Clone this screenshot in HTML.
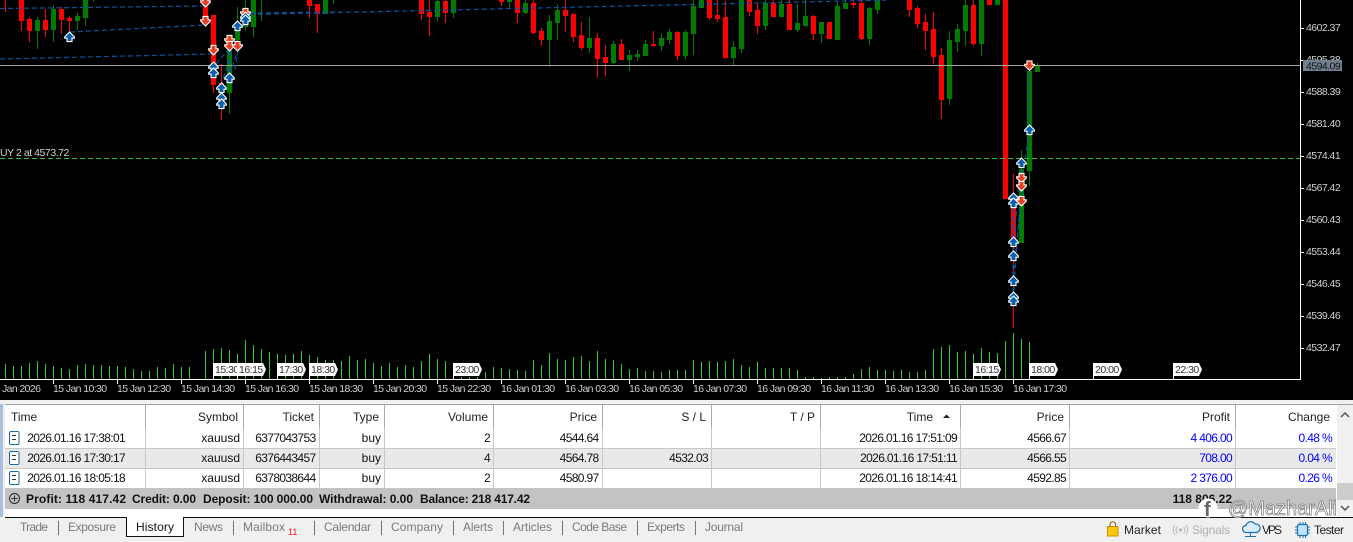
<!DOCTYPE html>
<html><head><meta charset="utf-8"><style>
html,body{margin:0;padding:0;width:1353px;height:542px;overflow:hidden;background:#f0f0f0}
svg{display:block;font-family:"Liberation Sans",sans-serif}
.p text{font-size:10.5px;letter-spacing:-.55px;fill:#d0d0d0}
.tm text{font-size:10.5px;letter-spacing:-.6px;fill:#d0d0d0}
.tg text{font-size:10.5px;letter-spacing:-.5px;fill:#333}
.h text{font-size:12px;fill:#222;text-anchor:end}
.r text{font-size:12px;letter-spacing:-.65px;fill:#111;text-anchor:end}
.r .a{letter-spacing:0}
.r .b{fill:#0000ff}
.s text{font-size:12px;font-weight:bold;fill:#111}
.t text{font-size:12px;fill:#7a7a7a}
.st text{font-size:12px;fill:#222}
</style></head><body>
<svg width="1353" height="542" viewBox="0 0 1353 542" xmlns="http://www.w3.org/2000/svg">
<defs>
<path id="u" d="M0-5 4.800-.2V1.200H2.500V4.600H-2.500V1.200H-4.800V-.2Z" fill="#0a5fae" stroke="#fff" stroke-width="1.100"/>
<path id="d" d="M0 5 4.800 .2V-1.200H2.500V-4.600H-2.500V-1.200H-4.800V.2Z" fill="#e8401f" stroke="#fff" stroke-width="1.100"/>
</defs>
<rect width="1353" height="400" fill="#000"/>

<!-- volumes -->
<path stroke="#32cd32" fill="none" shape-rendering="crispEdges" d="M5.5 364V379M13.5 366V379M21.5 366V379M29.5 363V379M37.5 361V379M45.5 364V379M53.5 366V379M61.5 368V379M69.5 369V379M77.5 365V379M85.5 364V379M93.5 365V379M101.5 365V379M109.5 366V379M117.5 366V379M125.5 367V379M133.5 369V379M141.5 371V379M149.5 371V379M157.5 367V379M165.5 368V379M173.5 364V379M181.5 367V379M189.5 367V379M205.5 351V379M213.5 349V379M221.5 348V379M229.5 350V379M237.5 354V379M245.5 340V379M253.5 345V379M261.5 349V379M269.5 352V379M277.5 354V379M285.5 355V379M293.5 354V379M301.5 351V379M309.5 355V379M317.5 357V379M325.5 360V379M333.5 360V379M341.5 361V379M349.5 356V379M357.5 360V379M365.5 359V379M373.5 363V379M381.5 366V379M389.5 363V379M397.5 367V379M405.5 365V379M413.5 367V379M421.5 361V379M429.5 354V379M437.5 359V379M445.5 361V379M461.5 377V379M469.5 377V379M477.5 377V379M485.5 372V379M493.5 367V379M501.5 368V379M509.5 369V379M517.5 370V379M525.5 371V379M533.5 360V379M541.5 365V379M549.5 353V379M557.5 359V379M565.5 360V379M573.5 357V379M581.5 356V379M589.5 361V379M597.5 351V379M605.5 359V379M613.5 360V379M621.5 364V379M629.5 369V379M637.5 368V379M645.5 371V379M653.5 371V379M661.5 372V379M669.5 370V379M677.5 370V379M685.5 370V379M693.5 360V379M701.5 362V379M709.5 361V379M717.5 362V379M725.5 361V379M733.5 359V379M741.5 365V379M749.5 367V379M757.5 362V379M765.5 368V379M773.5 368V379M781.5 368V379M789.5 368V379M797.5 370V379M805.5 377V379M813.5 377V379M821.5 378V379M829.5 377V379M837.5 377V379M845.5 377V379M853.5 374V379M861.5 369V379M869.5 367V379M877.5 370V379M885.5 370V379M893.5 371V379M901.5 370V379M909.5 372V379M917.5 372V379M925.5 370V379M933.5 349V379M941.5 347V379M949.5 345V379M957.5 352V379M965.5 351V379M973.5 354V379M981.5 348V379M989.5 352V379M997.5 353V379M1005.5 341V379M1013.5 333V379M1021.5 339V379M1029.5 342V379"/>

<!-- red wicks -->
<path stroke="#f00" fill="none" shape-rendering="crispEdges" d="M5.5 0V12M21.5 0V31M29.5 17V42M45.5 9V37M61.5 7V34M69.5 16V33M205.5 0V27M213.5 15V93M221.5 64V120M309.5 0V18M317.5 4V33M421.5 0V20M429.5 0V36M445.5 0V23M501.5 0V6M517.5 0V23M533.5 0V34M541.5 28V46M565.5 0V32M573.5 13V42M581.5 22V50M597.5 33V78M605.5 45V76M621.5 39V60M653.5 31V47M677.5 31V60M709.5 0V20M717.5 0V22M725.5 1V59M749.5 0V16M757.5 3V34M773.5 0V17M789.5 0V30M813.5 15V40M829.5 22V39M853.5 0V8M861.5 0V40M909.5 0V17M917.5 6V28M925.5 14V50M933.5 12V64M941.5 48V119M973.5 0V46M1005.5 0V199M1013.5 174V328"/>
<!-- red bodies -->
<path stroke="#f00" stroke-width="5" fill="none" shape-rendering="crispEdges" d="M21.5 0V21M29.5 19V31M45.5 20V30M61.5 9V20M69.5 18V21M205.5 0V20M213.5 15V85M221.5 83V90M309.5 0V6M317.5 4V14M421.5 0V14M429.5 12V17M445.5 1V13M501.5 0V2M517.5 0V13M533.5 3V33M541.5 31V40M565.5 10V16M573.5 14V37M581.5 35V48M597.5 38V59M605.5 57V63M621.5 44V60M653.5 44V46M677.5 32V56M709.5 0V18M717.5 15V19M725.5 17V58M749.5 0V12M757.5 10V26M773.5 3V17M789.5 4V30M813.5 16V34M829.5 22V39M853.5 3V5M861.5 3V39M909.5 0V10M917.5 8V24M925.5 22V31M933.5 29V57M941.5 55V100M973.5 5V44M989.5 0V5M1005.5 0V199M1013.5 207V240"/>
<!-- green wicks -->
<path stroke="#007d00" fill="none" shape-rendering="crispEdges" d="M37.5 17V49M53.5 5V42M77.5 13V30M85.5 0V26M93.5 0V2M229.5 40V114M237.5 7V55M245.5 0V31M253.5 0V37M261.5 0V21M325.5 0V14M333.5 0V4M437.5 0V21M453.5 0V18M509.5 0V8M525.5 0V14M549.5 15V67M557.5 4V40M589.5 17V53M613.5 41V64M629.5 50V71M637.5 50V61M645.5 40V56M661.5 33V51M669.5 29V44M685.5 30V59M693.5 0V55M701.5 0V8M733.5 41V66M741.5 0V53M765.5 0V30M781.5 0V17M797.5 4V32M805.5 0V27M821.5 22V43M837.5 2V40M845.5 0V9M869.5 7V45M877.5 0V14M949.5 31V105M957.5 24V52M965.5 0V46M981.5 0V56M997.5 0V5M1021.5 150V243M1029.5 65V186M1037.5 63V72"/>
<!-- green bodies -->
<path stroke="#007d00" stroke-width="5" fill="none" shape-rendering="crispEdges" d="M37.5 20V31M53.5 9V30M77.5 16V21M85.5 0V18M229.5 50V93M237.5 30V40M245.5 25V27M253.5 0V27M325.5 0V14M437.5 1V17M453.5 0V13M509.5 0V2M525.5 3V13M549.5 21V40M557.5 10V23M589.5 38V48M613.5 44V63M629.5 55V60M637.5 54V57M645.5 44V56M661.5 38V46M669.5 32V40M685.5 32V56M693.5 6V34M701.5 0V8M733.5 47V58M741.5 0V49M765.5 3V26M781.5 4V17M797.5 23V30M805.5 16V26M821.5 22V34M837.5 6V40M845.5 3V9M869.5 8V39M877.5 0V10M949.5 40V99M957.5 29V42M965.5 5V31M981.5 0V44M997.5 0V5M1021.5 169V243M1029.5 71V171M1037.5 65V72"/>

<!-- horizontal lines -->
<path stroke="#a6a6a6" d="M0 65.5H1300" shape-rendering="crispEdges"/>
<path stroke="#2fc42f" stroke-dasharray="5 3" d="M0 158.5H1300" shape-rendering="crispEdges"/>
<text x="0" y="156" font-size="10.5" letter-spacing="-.45" fill="#d0d0d0">UY 2 at 4573.72</text>

<!-- dashed trade lines -->
<g stroke="#0b5299" stroke-width="1.2" stroke-dasharray="5 3" fill="none">
<path d="M0 8.5L205 6M70 32L205 25M0 59L213 54M250 14.5L890 0M250 13L340 12"/>
<path d="M216 64L228 50M221 86L232 50M225 90L237 52M229 80V50M235 70L238 50"/>
<path d="M1029.5 65V130M1029.5 130L1021 186M1013 300L1021 190M1014 270L1021 200M1014 240L1020 170M1013 200V300"/>
</g>

<!-- arrows -->
<use href="#d" x="205.5" y="2"/><use href="#d" x="205.5" y="21"/><use href="#d" x="213.5" y="50"/><use href="#d" x="229.5" y="40"/><use href="#d" x="229.5" y="46"/><use href="#d" x="237.5" y="46"/><use href="#d" x="245.5" y="13"/>
<use href="#u" x="69.5" y="37"/><use href="#u" x="213.5" y="67"/><use href="#u" x="213.5" y="73"/><use href="#u" x="237.5" y="26"/><use href="#u" x="245.5" y="17"/><use href="#u" x="245.5" y="20"/><use href="#u" x="229.5" y="78"/><use href="#u" x="221.5" y="88"/><use href="#u" x="221.5" y="98"/><use href="#u" x="221.5" y="104"/>
<use href="#d" x="1029.5" y="65.5"/><use href="#u" x="1029.5" y="130"/><use href="#u" x="1021.5" y="163"/><use href="#d" x="1021.5" y="178"/><use href="#d" x="1021.5" y="186"/><use href="#d" x="1021.5" y="201"/>
<use href="#u" x="1013.5" y="198"/><use href="#u" x="1013.5" y="203"/><use href="#u" x="1013.5" y="242"/><use href="#u" x="1013.5" y="256"/><use href="#u" x="1013.5" y="281"/><use href="#u" x="1013.5" y="297"/><use href="#u" x="1013.5" y="301"/>

<!-- axis -->
<path stroke="#fff" fill="none" shape-rendering="crispEdges" d="M1300.5 0V379.5H0M1300 28.5h4M1300 60.5h4M1300 92.5h4M1300 124.5h4M1300 156.5h4M1300 188.5h4M1300 220.5h4M1300 252.5h4M1300 284.5h4M1300 316.5h4M1300 348.5h4M53.5 379V384M117.5 379V384M181.5 379V384M245.5 379V384M309.5 379V384M373.5 379V384M437.5 379V384M501.5 379V384M565.5 379V384M629.5 379V384M693.5 379V384M757.5 379V384M821.5 379V384M885.5 379V384M949.5 379V384M1013.5 379V384"/>
<g class="p">
<text x="1306" y="31">4602.37</text><text x="1306" y="63">4595.38</text><text x="1306" y="95">4588.39</text><text x="1306" y="127">4581.40</text><text x="1306" y="159">4574.41</text><text x="1306" y="191">4567.42</text><text x="1306" y="223">4560.43</text><text x="1306" y="255">4553.44</text><text x="1306" y="287">4546.45</text><text x="1306" y="319">4539.46</text><text x="1306" y="351">4532.47</text>
</g>
<rect x="1303" y="60" width="39" height="11" fill="#708090"/>
<text x="1306" y="69.500" font-size="10.5" letter-spacing="-.55" fill="#111">4594.09</text>
<g class="tm">
<text x="2" y="392">Jan 2026</text><text x="53" y="392">15 Jan 10:30</text><text x="117" y="392">15 Jan 12:30</text><text x="181" y="392">15 Jan 14:30</text><text x="245" y="392">15 Jan 16:30</text><text x="309" y="392">15 Jan 18:30</text><text x="373" y="392">15 Jan 20:30</text><text x="437" y="392">15 Jan 22:30</text><text x="501" y="392">16 Jan 01:30</text><text x="565" y="392">16 Jan 03:30</text><text x="629" y="392">16 Jan 05:30</text><text x="693" y="392">16 Jan 07:30</text><text x="757" y="392">16 Jan 09:30</text><text x="821" y="392">16 Jan 11:30</text><text x="885" y="392">16 Jan 13:30</text><text x="949" y="392">16 Jan 15:30</text><text x="1013" y="392">16 Jan 17:30</text>
</g>
<!-- time tags -->
<g class="tg">
<path fill="#fff" d="M213 363h28l3 6.5-3 6.500h-27v3h-1zM237 363h26l3 6.500-3 6.500h-25v3h-1zM277 363h26l3 6.500-3 6.500h-25v3h-1zM309 363h26l3 6.500-3 6.500h-25v3h-1zM453 363h26l3 6.500-3 6.500h-25v3h-1zM973 363h25l3 6.500-3 6.500h-24v3h-1zM1029 363h26l3 6.500-3 6.500h-25v3h-1zM1093 363h26l3 6.500-3 6.500h-25v3h-1zM1173 363h26l3 6.500-3 6.500h-25v3h-1z"/>
<text x="215" y="373">15:30</text>
<path fill="#fff" d="M237 363h2v13h-2z"/>
<text x="239" y="373">16:15</text><text x="279" y="373">17:30</text><text x="311" y="373">18:30</text><text x="455" y="373">23:00</text><text x="975" y="373">16:15</text><text x="1031" y="373">18:00</text><text x="1095" y="373">20:00</text><text x="1175" y="373">22:30</text>
</g>

<!-- panel -->
<rect y="400" width="1353" height="142" fill="#f0f0f0"/>
<rect x="0" y="404" width="3" height="113" fill="#a9c0dc"/>
<rect x="5" y="404" width="1332" height="113" fill="#fff"/>
<rect x="5" y="404" width="1348" height="1" fill="#a0a0a0"/>
<rect x="5" y="449" width="1331" height="19" fill="#e9e9e9"/>
<rect x="5" y="488" width="1331" height="21" fill="#c3c3c3"/>
<path stroke="#c8c8c8" fill="none" shape-rendering="crispEdges" d="M5 448.500H1336M5 468.500H1336M145.500 428V488M243.500 428V488M319.500 428V488M384.500 428V488M493.500 428V488M602.500 428V488M711.500 428V488M820.500 428V488M960.500 428V488M1069.500 428V488M1235.500 428V488"/>
<path stroke="#a8a8a8" fill="none" shape-rendering="crispEdges" d="M145.500 405V428M243.500 405V428M319.500 405V428M384.500 405V428M493.500 405V428M602.500 405V428M711.500 405V428M820.500 405V428M960.500 405V428M1069.500 405V428M1235.500 405V428"/>

<!-- header -->
<text x="11" y="421" font-size="12" fill="#222">Time</text>
<g class="h">
<text x="238" y="421">Symbol</text><text x="314" y="421">Ticket</text><text x="379" y="421">Type</text><text x="488" y="421">Volume</text><text x="597" y="421">Price</text><text x="706" y="421">S / L</text><text x="815" y="421">T / P</text><text x="933" y="421">Time</text><text x="1064" y="421">Price</text><text x="1230" y="421">Profit</text><text x="1330" y="421">Change</text>
</g>
<path d="M943 418l3.500-3.500 3.500 3.500z" fill="#222"/>

<!-- doc icons -->
<g fill="#fff" stroke="#1a6a9f" shape-rendering="crispEdges">
<rect x="9.500" y="431.500" width="9.500" height="13" rx="1.500"/><rect x="9.500" y="451.500" width="9.500" height="13" rx="1.500"/><rect x="9.500" y="471.500" width="9.500" height="13" rx="1.500"/>
<path d="M12 435.500h4M12 439.500h4M12 455.500h4M12 459.500h4M12 475.500h4M12 479.500h4" stroke="#333"/>
</g>

<!-- rows -->
<g class="r">
<text x="125" y="442">2026.01.16 17:38:01</text><text class="a" x="240" y="442">xauusd</text><text x="315.500" y="442">6377043753</text><text class="a" x="381" y="442">buy</text><text x="490" y="442">2</text><text x="598.500" y="442">4544.64</text><text x="957" y="442">2026.01.16 17:51:09</text><text x="1066" y="442">4566.67</text><text class="b" x="1232" y="442">4 406.00</text><text class="b" x="1332" y="442">0.48 %</text>
<text x="125" y="462">2026.01.16 17:30:17</text><text class="a" x="240" y="462">xauusd</text><text x="315.500" y="462">6376443457</text><text class="a" x="381" y="462">buy</text><text x="490" y="462">4</text><text x="598.500" y="462">4564.78</text><text x="708" y="462">4532.03</text><text x="957" y="462">2026.01.16 17:51:11</text><text x="1066" y="462">4566.55</text><text class="b" x="1232" y="462">708.00</text><text class="b" x="1332" y="462">0.04 %</text>
<text x="125" y="482">2026.01.16 18:05:18</text><text class="a" x="240" y="482">xauusd</text><text x="315.500" y="482">6378038644</text><text class="a" x="381" y="482">buy</text><text x="490" y="482">2</text><text x="598.500" y="482">4580.97</text><text x="957" y="482">2026.01.16 18:14:41</text><text x="1066" y="482">4592.85</text><text class="b" x="1232" y="482">2 376.00</text><text class="b" x="1332" y="482">0.26 %</text>
</g>

<!-- summary -->
<circle cx="14.500" cy="498.500" r="5" fill="none" stroke="#222"/>
<path d="M11.500 498.500h6M14.500 495.500v6" stroke="#222" fill="none"/>
<g class="s">
<text x="26" y="503" textLength="100">Profit: 118 417.42</text><text x="132" y="503" textLength="64">Credit: 0.00</text><text x="203" y="503" textLength="110">Deposit: 100 000.00</text><text x="319" y="503" textLength="94">Withdrawal: 0.00</text><text x="420" y="503" textLength="110">Balance: 218 417.42</text>
<text x="1232" y="503" text-anchor="end">118 806.22</text>
</g>

<!-- scrollbar -->
<rect x="1337" y="405" width="16" height="112" fill="#f0f0f0"/>
<rect x="1337" y="483" width="16" height="17" fill="#cdcdcd"/>
<path d="M1341 417l4-4 4 4M1341 506l4 4 4-4" fill="none" stroke="#555" stroke-width="1.500"/>

<!-- tabs -->
<rect x="5" y="517" width="1348" height="1" fill="#111"/>
<path d="M127 517V536.500H183.500V517z" fill="#fff"/>
<path d="M126.500 517V536.500H183.500V517" fill="none" stroke="#111" shape-rendering="crispEdges"/>
<rect x="127" y="517" width="56" height="1" fill="#fff"/>
<g class="t">
<text x="20" y="531" textLength="28">Trade</text><text x="68" y="531" textLength="48">Exposure</text><text x="136" y="531" textLength="38" style="fill:#111">History</text><text x="194" y="531" textLength="29">News</text><text x="243" y="531" textLength="42">Mailbox</text><text x="324" y="531" textLength="47">Calendar</text><text x="391" y="531" textLength="52">Company</text><text x="463" y="531" textLength="30">Alerts</text><text x="513" y="531" textLength="39">Articles</text><text x="572" y="531" textLength="55">Code Base</text><text x="647" y="531" textLength="38">Experts</text><text x="705" y="531" textLength="38">Journal</text>
</g>
<text x="288" y="535" font-size="9" fill="#e02020">11</text>
<path stroke="#777" fill="none" shape-rendering="crispEdges" d="M58.500 521V535M233.500 521V535M314.500 521V535M381.500 521V535M453.500 521V535M503.500 521V535M562.500 521V535M637.500 521V535M695.500 521V535"/>

<!-- status -->
<path d="M1107.500 526.500h10.500v9.500h-10.500z" fill="#fdc70c" stroke="#c89400"/>
<path d="M1110 526.500v-2a2.800 2.800 0 0 1 5.600 0v2" fill="none" stroke="#7a5a00"/>
<g class="st">
<text x="1124" y="534" textLength="37">Market</text>
<text x="1192" y="534" textLength="38" style="fill:#b0b0b0">Signals</text>
<text x="1262" y="534" textLength="20">VPS</text>
<text x="1314" y="534" textLength="30">Tester</text>
</g>
<g fill="none" stroke="#b8b8b8">
<circle cx="1180.500" cy="530" r="1.300" fill="#b8b8b8"/>
<path d="M1177.500 526.500a5 5 0 0 0 0 7M1183.500 526.500a5 5 0 0 1 0 7M1175 525a8 8 0 0 0 0 10M1186 525a8 8 0 0 1 0 10"/>
</g>
<path d="M1246 532.500a3.500 3.500 0 0 1 0-7 5 5 0 0 1 9-1.500 4.200 4.200 0 0 1 1.500 8.500z" fill="#d8ecfa" stroke="#1a6fb5" stroke-width="1.200"/>
<path d="M1250.500 532.500v4M1245 536.500h11" stroke="#1a6fb5" fill="none"/>
<rect x="1297.500" y="524.500" width="10" height="11" rx="1.500" fill="#bfe3fa" stroke="#1a6fb5" stroke-width="1.200"/>
<path d="M1295 527h2M1295 530h2M1295 533h2M1308 527h2M1308 530h2M1308 533h2M1300 522v2M1303 522v2M1305.500 522v2M1300 536v2M1303 536v2M1305.500 536v2" stroke="#1a6fb5" fill="none"/>

<!-- watermark -->
<circle cx="1208" cy="508" r="9.500" fill="#fff"/>
<text x="1204" y="516" font-size="20" font-weight="bold" fill="#333" fill-opacity=".75">f</text>
<text x="1228" y="515" font-size="20" textLength="109" fill="#fff" stroke="#777" stroke-width=".7">@MazharAli</text>
</svg>
</body></html>
